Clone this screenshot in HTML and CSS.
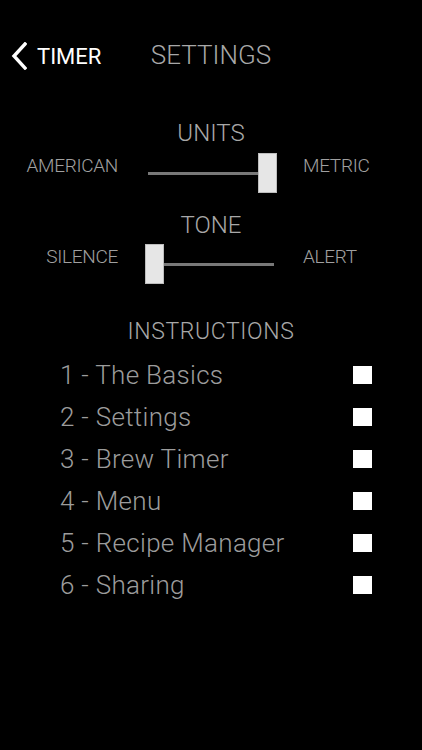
FILE: index.html
```html
<!DOCTYPE html>
<html lang="en">
<head>
<meta charset="utf-8">
<title>Settings</title>
<link rel="stylesheet" href="styles.css">
</head>
<body>
<div class="screen">
  <header class="nav">
    <a class="back" href="#">
      <svg class="chev" width="16" height="28" viewBox="0 0 16 28"><polyline points="14,2 3,14 14,26" fill="none" stroke="#fff" stroke-width="3.4" stroke-linecap="square" stroke-linejoin="miter"/></svg>
      <span class="back-label">TIMER</span>
    </a>
    <h1 class="title">SETTINGS</h1>
    <span class="spacer"></span>
  </header>

  <section class="setting units">
    <h2 class="setting-title">UNITS</h2>
    <div class="slider-row">
      <span class="opt left">AMERICAN</span>
      <div class="slider">
        <div class="track"></div>
        <div class="thumb at-end"></div>
      </div>
      <span class="opt right">METRIC</span>
    </div>
  </section>

  <section class="setting tone">
    <h2 class="setting-title">TONE</h2>
    <div class="slider-row">
      <span class="opt left">SILENCE</span>
      <div class="slider">
        <div class="track"></div>
        <div class="thumb at-start"></div>
      </div>
      <span class="opt right">ALERT</span>
    </div>
  </section>

  <section class="instructions">
    <h2 class="instr-title">INSTRUCTIONS</h2>
    <ul class="instr-list">
      <li class="instr-item"><span>1 - The Basics</span><span class="box"></span></li>
      <li class="instr-item"><span>2 - Settings</span><span class="box"></span></li>
      <li class="instr-item"><span>3 - Brew Timer</span><span class="box"></span></li>
      <li class="instr-item"><span>4 - Menu</span><span class="box"></span></li>
      <li class="instr-item"><span>5 - Recipe Manager</span><span class="box"></span></li>
      <li class="instr-item"><span>6 - Sharing</span><span class="box"></span></li>
    </ul>
  </section>
</div>
</body>
</html>
```

FILE: styles.css
```css
html, body {
  margin: 0;
  padding: 0;
  background: #000;
}
body {
  font-family: Roboto, "Liberation Sans", sans-serif;
  font-weight: 300;
  color: #a0a0a0;
}
.screen {
  width: 422px;
  height: 750px;
  background: #000;
  overflow: hidden;
}
.nav {
  display: grid;
  grid-template-columns: 1fr auto 1fr;
  align-items: baseline;
  padding-top: 42px;
  height: 26px;
}
.back {
  display: flex;
  align-items: baseline;
  text-decoration: none;
  color: #fff;
  padding-left: 11px;
}
.chev {
  align-self: center;
  margin-right: 10px;
  position: relative;
  top: -4px;
}
.back-label {
  font-size: 22px;
  line-height: 22px;
  font-weight: 400;
}
.title {
  margin: 0;
  font-size: 26px;
  line-height: 26px;
  font-weight: 300;
  color: #a8a8a8;
}
.setting-title {
  margin: 0;
  text-align: center;
  font-size: 24px;
  line-height: 24px;
  font-weight: 300;
  color: #a8a8a8;
}
.units { margin-top: 53px; }
.tone { margin-top: 20px; }
.slider-row {
  display: grid;
  grid-template-columns: 118px 132px 1fr;
  column-gap: 27px;
  align-items: start;
  margin-top: 8px;
}
.tone .slider-row { margin-top: 7px; }
.opt {
  font-size: 19px;
  line-height: 19px;
  letter-spacing: -0.3px;
  margin-top: 3px;
  color: #a0a0a0;
}
.opt.left { text-align: right; }
.opt.right { margin-left: -1px; }
.slider {
  position: relative;
  height: 40px;
}
.track {
  position: absolute;
  left: 3px;
  right: 3px;
  top: 19px;
  height: 3px;
  background: #787878;
}
.thumb {
  position: absolute;
  top: 0;
  width: 17px;
  height: 38px;
  background: #e6e6e6;
  border: 1px solid #bdbdbd;
}
.thumb.at-end { right: 0; }
.thumb.at-start { left: 0; }
.instructions { margin-top: 36px; }
.instr-title {
  margin: 0;
  text-align: center;
  font-size: 23px;
  line-height: 23px;
  letter-spacing: 0.6px;
  font-weight: 300;
  color: #a8a8a8;
}
.instr-list {
  list-style: none;
  margin: 11px 0 0;
  padding: 0 50px 0 60px;
}
.instr-item {
  display: flex;
  justify-content: space-between;
  align-items: center;
  height: 42px;
  font-size: 26px;
  line-height: 42px;
  letter-spacing: 0.3px;
  color: #9c9c9c;
}
.box {
  width: 19px;
  height: 18px;
  background: #fff;
}
```
